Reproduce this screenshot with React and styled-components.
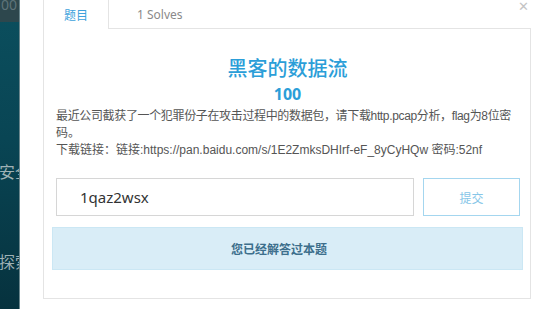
import styled, { createGlobalStyle } from "styled-components";

const Global = createGlobalStyle`
  html, body { margin: 0; padding: 0; background: #fff; }
  body {
    font-family: "Noto Sans", "Noto Sans CJK SC", sans-serif;
    width: 554px;
    height: 309px;
    overflow: hidden;
  }
`;

const Page = styled.div`
  display: flex;
  width: 554px;
  height: 309px;
`;

const Backdrop = styled.div`
  width: 19px;
  flex-shrink: 0;
  display: flex;
  flex-direction: column;
  overflow: hidden;
  background: linear-gradient(180deg, #0b4f5e 0%, #094554 45%, #06323e 100%);
  border-right: 1px solid #6a868c;
`;

const BackdropTop = styled.div`
  height: 22px;
  background: #2d474d;
  color: #5f7479;
  font-size: 14px;
  line-height: 10px;
  white-space: nowrap;
  padding-left: 1px;
`;

const BackdropWord = styled.div`
  white-space: nowrap;
  color: #9fb1b5;
  font-family: "Noto Sans CJK SC", sans-serif;
  font-size: 16px;
  line-height: 20px;
  margin-top: ${(p) => p.$top}px;
  margin-left: -1px;
`;

const Modal = styled.div`
  flex: 1;
  position: relative;
  background: #fff;
  padding: 0 23px 0 23px;
  display: flex;
  flex-direction: column;
`;

const Close = styled.span`
  position: absolute;
  right: 25px;
  top: 0;
  color: #c4c4c4;
  font-family: "DejaVu Sans", sans-serif;
  font-size: 13px;
  line-height: 13px;
`;

const Tabs = styled.div`
  display: flex;
  height: 29px;
`;

const Tab = styled.div`
  height: 29px;
  box-sizing: border-box;
  padding: 0 ${(p) => p.$pad}px;
  display: flex;
  align-items: center;
  font-size: 12px;
  color: ${(p) => (p.$active ? "#3ea2dc" : "#8a8a8a")};
  border-left: ${(p) => (p.$active ? "1px solid #e4e4e4" : "none")};
  border-right: ${(p) => (p.$active ? "1px solid #e4e4e4" : "none")};
  border-bottom: ${(p) => (p.$active ? "none" : "1px solid #e4e4e4")};
`;

const TabFill = styled.div`
  flex: 1;
  border-bottom: 1px solid #e4e4e4;
`;

const Panel = styled.div`
  width: 488px;
  height: 270px;
  box-sizing: border-box;
  border: 1px solid #e4e4e4;
  border-top: none;
  padding: 25px 7px 0 8px;
  display: flex;
  flex-direction: column;
`;

const Title = styled.div`
  text-align: center;
  font-family: "Noto Sans CJK SC", sans-serif;
  font-size: 20px;
  line-height: 28px;
  color: #2b9ed8;
  font-weight: 500;
`;

const Score = styled.div`
  text-align: center;
  font-size: 16px;
  line-height: 22px;
  font-weight: 700;
  color: #2b9ed8;
  margin-top: 1px;
`;

const Desc = styled.div`
  margin: 3px 0 0 4px;
  font-family: "Liberation Sans", "Noto Sans CJK SC", sans-serif;
  font-size: 12px;
  line-height: 17px;
  color: #555;
`;

const Line = styled.div`
  white-space: nowrap;
  letter-spacing: ${(p) => p.$tight || 0}px;
`;

const FormRow = styled.div`
  display: flex;
  gap: 9px;
  margin: 19px 3px 0 4px;
`;

const Input = styled.div`
  flex: 1;
  height: 38px;
  box-sizing: border-box;
  border: 1px solid #d6d6d6;
  padding-left: 23px;
  display: flex;
  align-items: center;
  font-size: 15px;
  color: #333;
`;

const Submit = styled.div`
  width: 97px;
  height: 38px;
  box-sizing: border-box;
  border: 1px solid #a4d6ef;
  display: flex;
  align-items: center;
  justify-content: center;
  font-family: "Noto Sans CJK SC", sans-serif;
  font-size: 12px;
  color: #86c6e8;
`;

const Alert = styled.div`
  margin-top: 11px;
  height: 43px;
  box-sizing: border-box;
  background: #d9edf7;
  border: 1px solid #cbe7f4;
  display: flex;
  align-items: center;
  justify-content: center;
  padding-right: 17px;
  font-family: "Noto Sans CJK SC", sans-serif;
  font-size: 12px;
  font-weight: 700;
  color: #3d6f8c;
`;

export default function App() {
  return (
    <Page>
      <Global />
      <Backdrop>
        <BackdropTop>00</BackdropTop>
        <BackdropWord $top={139}>安全</BackdropWord>
        <BackdropWord $top={70}>探索</BackdropWord>
      </Backdrop>
      <Modal>
        <Close>✕</Close>
        <Tabs>
          <Tab $active $pad={20}>题目</Tab>
          <Tab $pad={28}>1 Solves</Tab>
          <TabFill />
        </Tabs>
        <Panel>
          <Title>黑客的数据流</Title>
          <Score>100</Score>
          <Desc>
            <Line $tight={-0.35}>
              最近公司截获了一个犯罪份子在攻击过程中的数据包，请下载http.pcap分析，flag为8位密
            </Line>
            <Line>码。</Line>
            <Line>下载链接：链接:https://pan.baidu.com/s/1E2ZmksDHIrf-eF_8yCyHQw 密码:52nf</Line>
          </Desc>
          <FormRow>
            <Input>1qaz2wsx</Input>
            <Submit>提交</Submit>
          </FormRow>
          <Alert>您已经解答过本题</Alert>
        </Panel>
      </Modal>
    </Page>
  );
}
